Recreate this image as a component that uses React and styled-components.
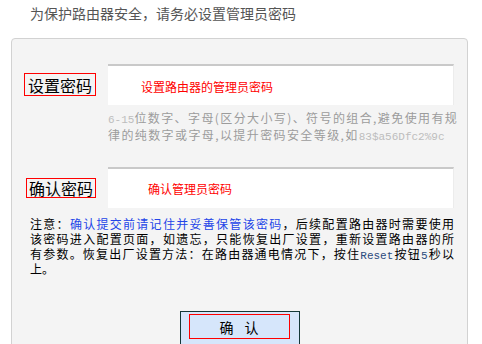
import React from "react";
import styled, { createGlobalStyle } from "styled-components";

const GlobalStyle = createGlobalStyle`
  body {
    margin: 0;
    background: #fff;
    font-family: "Noto Sans CJK SC", "Liberation Sans", sans-serif;
  }
`;

const Page = styled.div`
  width: 482px;
  height: 344px;
  overflow: hidden;
`;

const Intro = styled.div`
  height: 38px;
  box-sizing: border-box;
  padding: 4px 0 0 30px;
  font-size: 14px;
  line-height: 18px;
  color: #555;
`;

const Panel = styled.div`
  margin-left: 11px;
  width: 457px;
  height: 330px;
  box-sizing: border-box;
  padding-top: 25px;
  background: #f4f4f4;
  border: 1px solid #d2d2d2;
  border-radius: 4px;
`;

const Field = styled.div`
  display: grid;
  grid-template-columns: 96px 346px;
  align-items: center;
  margin-top: ${(p) => p.$top || 0}px;
`;

const Label = styled.span`
  box-sizing: border-box;
  width: ${(p) => p.$w}px;
  height: ${(p) => p.$h}px;
  margin-left: ${(p) => 84 - p.$w}px;
  border: 1px solid #f00;
  display: flex;
  align-items: center;
  justify-content: center;
  font-size: 16px;
  line-height: 1;
  color: #000;
  white-space: nowrap;
`;

const Input = styled.div`
  box-sizing: border-box;
  height: 41px;
  background: #fff;
  border-top: 2px solid #c9c9c9;
  border-right: 1px solid #ececec;
  display: flex;
  align-items: center;
  padding-left: ${(p) => p.$indent}px;
`;

const Placeholder = styled.span`
  font-size: 12px;
  line-height: 1;
  color: #f00;
  margin-top: ${(p) => p.$shift || 0}px;
`;

const Hint = styled.div`
  margin: 4px 0 0 96px;
  font-size: 12px;
  line-height: 17px;
  letter-spacing: 1.4px;
  color: #9c9c9c;
  white-space: nowrap;
`;

const Mono = styled.span`
  font-family: "Liberation Mono", "DejaVu Sans Mono", monospace;
  font-size: 11px;
  line-height: 1;
  letter-spacing: 0;
  color: ${(p) => p.$color || "#bdbdbd"};
`;

const Note = styled.div`
  margin: 8px 0 0 18px;
  width: 424px;
  font-size: 12px;
  line-height: 15px;
  color: #000;
`;

const NoteLine = styled.span`
  display: block;
  height: 15px;
  white-space: nowrap;
  text-align: ${(p) => (p.$last ? "left" : "justify")};
  text-align-last: ${(p) => (p.$last ? "left" : "justify")};
`;

const Emph = styled.span`
  color: #2345e8;
`;

const ButtonRow = styled.div`
  display: flex;
  justify-content: center;
  margin-top: 35px;
`;

const SubmitButton = styled.button`
  box-sizing: border-box;
  width: 120px;
  height: 34px;
  padding: 2px 9px 0 8px;
  background: #d6e6fb;
  border: 1px solid #143838;
  display: flex;
  align-items: flex-start;
  cursor: pointer;
`;

const ButtonFace = styled.span`
  box-sizing: border-box;
  flex: 1;
  height: 25px;
  border: 1px solid #f00;
  display: flex;
  align-items: center;
  justify-content: center;
  gap: 11px;
  font-family: "Noto Sans CJK SC", sans-serif;
  font-size: 14px;
  line-height: 1;
  color: #000;
`;

export default function App() {
  return (
    <Page>
      <GlobalStyle />
      <Intro>为保护路由器安全，请务必设置管理员密码</Intro>
      <Panel>
        <Field>
          <Label $w={72} $h={23}>设置密码</Label>
          <Input $indent={33}>
            <Placeholder $shift={2}>设置路由器的管理员密码</Placeholder>
          </Input>
        </Field>
        <Hint>
          <Mono>6-15</Mono>位数字、字母(区分大小写)、符号的组合,避免使用有规
          <br />
          律的纯数字或字母,以提升密码安全等级,如<Mono>83$a56Dfc2%9c</Mono>
        </Hint>
        <Field $top={24}>
          <Label $w={70} $h={20}>确认密码</Label>
          <Input $indent={40}>
            <Placeholder>确认管理员密码</Placeholder>
          </Input>
        </Field>
        <Note>
          <NoteLine>
            注意：<Emph>确认提交前请记住并妥善保管该密码</Emph>，后续配置路由器时需要使用
          </NoteLine>
          <NoteLine>该密码进入配置页面，如遗忘，只能恢复出厂设置，重新设置路由器的所</NoteLine>
          <NoteLine>
            有参数。恢复出厂设置方法：在路由器通电情况下，按住
            <Mono $color="#2b4a7c">Reset</Mono>按钮<Mono $color="#2b4a7c">5</Mono>秒以
          </NoteLine>
          <NoteLine $last>上。</NoteLine>
        </Note>
        <ButtonRow>
          <SubmitButton>
            <ButtonFace>
              <span>确</span>
              <span>认</span>
            </ButtonFace>
          </SubmitButton>
        </ButtonRow>
      </Panel>
    </Page>
  );
}
